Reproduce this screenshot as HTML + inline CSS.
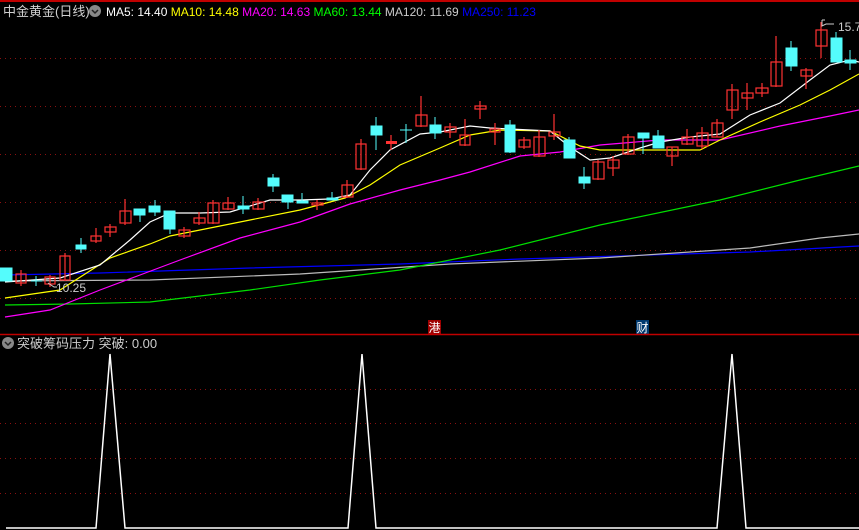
<!DOCTYPE html>
<html><head><meta charset="utf-8"><style>
html,body{margin:0;padding:0;background:#000;width:859px;height:530px;overflow:hidden}
svg{display:block}
text{font-family:"Liberation Sans","Noto Sans CJK SC",sans-serif}
</style></head><body>
<svg width="859" height="530" viewBox="0 0 859 530" xmlns="http://www.w3.org/2000/svg">
<rect width="859" height="530" fill="#000"/>
<line x1="0" y1="1" x2="859" y2="1" stroke="#c00000" stroke-width="2"/>
<g stroke="#8a1010" stroke-width="1" stroke-dasharray="1,4">
<line x1="0" y1="58.5" x2="859" y2="58.5"/><line x1="0" y1="106.5" x2="859" y2="106.5"/>
<line x1="0" y1="154.5" x2="859" y2="154.5"/><line x1="0" y1="202.5" x2="859" y2="202.5"/>
<line x1="0" y1="250.5" x2="859" y2="250.5"/><line x1="0" y1="298.5" x2="859" y2="298.5"/>
<line x1="0" y1="389.5" x2="859" y2="389.5"/><line x1="0" y1="423.5" x2="859" y2="423.5"/>
<line x1="0" y1="458.5" x2="859" y2="458.5"/><line x1="0" y1="493.5" x2="859" y2="493.5"/>
</g>
<text x="3" y="16" font-size="13" fill="#d0d0d0">中金黄金(日线)</text>
<circle cx="95" cy="11" r="6" fill="#888"/><path d="M92 10l3 3 3-3" stroke="#222" stroke-width="1.5" fill="none"/>
<text x="106" y="16" font-size="12"><tspan fill="#fff">MA5: 14.40 </tspan><tspan fill="#ffff00">MA10: 14.48 </tspan><tspan fill="#ff00ff">MA20: 14.63 </tspan><tspan fill="#00ff00">MA60: 13.44 </tspan><tspan fill="#ccc">MA120: 11.69 </tspan><tspan fill="#0000ff">MA250: 11.23</tspan></text>
<g fill="none" stroke-width="1.2">
<polyline stroke="#0000ff" points="5,275 100,273 250,268 400,264 520,259 650,255 750,252 859,246"/>
<polyline stroke="#bbb" points="5,281 150,280 300,274 450,264 600,258 750,248 820,238 859,234"/>
<polyline stroke="#00e000" points="5,305 70,304 150,302 250,290 320,280 400,270 500,250 600,225 720,200 800,180 859,166"/>
<polyline stroke="#ff00ff" points="5,317 50,310 100,290 140,275 180,260 240,238 300,222 350,204 400,190 440,180 470,172 520,156 560,152 600,145 660,140 720,140 780,126 830,116 859,110"/>
<polyline stroke="#ffff00" points="5,298 60,290 110,258 150,244 170,236 200,230 250,220 300,210 345,198 370,185 400,165 440,148 470,135 500,130 550,131 580,146 600,150 630,150 660,150 700,150 720,140 760,122 800,105 830,90 859,74"/>
<polyline stroke="#fff" points="5,282 60,278 100,265 130,240 150,222 170,213 200,213 230,212 270,200 300,200 330,199 350,195 370,170 390,150 420,134 440,132 470,126 490,128 510,129 550,131 570,147 590,160 610,158 640,148 660,142 690,137 720,134 750,115 780,103 810,80 830,65 850,60 859,62"/>
</g>
<g fill="#54fcfc" stroke="#54fcfc">
<rect x="0" y="268" width="12" height="13"/>
<line x1="36" y1="276" x2="36" y2="286"/><line x1="31" y1="281" x2="42" y2="281"/>
<line x1="81" y1="238" x2="81" y2="253"/><rect x="76" y="245" width="10" height="4"/>
<line x1="140" y1="209" x2="140" y2="222"/><rect x="134" y="209" width="11" height="6"/>
<line x1="155" y1="200" x2="155" y2="216"/><rect x="149" y="206" width="11" height="6"/>
<line x1="170" y1="211" x2="170" y2="234"/><rect x="164" y="211" width="11" height="18"/>
<line x1="243" y1="196" x2="243" y2="214"/><rect x="238" y="206" width="11" height="3"/>
<line x1="273" y1="174" x2="273" y2="192"/><rect x="268" y="178" width="11" height="8"/>
<line x1="288" y1="195" x2="288" y2="209"/><rect x="282" y="195" width="11" height="7"/>
<line x1="302" y1="193" x2="302" y2="203"/><rect x="297" y="201" width="11" height="2"/>
<line x1="332" y1="192" x2="332" y2="200"/><rect x="327" y="198" width="11" height="2"/>
<line x1="376" y1="117" x2="376" y2="150"/><rect x="371" y="126" width="11" height="9"/>
<line x1="406" y1="124" x2="406" y2="143"/><line x1="400" y1="130" x2="412" y2="130"/>
<line x1="435" y1="117" x2="435" y2="139"/><rect x="430" y="125" width="11" height="8"/>
<line x1="510" y1="120" x2="510" y2="153"/><rect x="505" y="125" width="10" height="27"/>
<line x1="569" y1="137" x2="569" y2="158"/><rect x="564" y="140" width="11" height="18"/>
<line x1="584" y1="167" x2="584" y2="189"/><rect x="579" y="177" width="11" height="6"/>
<line x1="643" y1="133" x2="643" y2="154"/><rect x="638" y="133" width="11" height="5"/>
<line x1="658" y1="130" x2="658" y2="148"/><rect x="653" y="136" width="11" height="12"/>
<line x1="791" y1="41" x2="791" y2="71"/><rect x="786" y="48" width="11" height="18"/>
<line x1="836" y1="32" x2="836" y2="62"/><rect x="831" y="38" width="11" height="24"/>
<line x1="850" y1="50" x2="850" y2="70"/><rect x="845" y="60" width="11" height="3"/>
</g>
<g fill="none" stroke="#ff3232" stroke-width="1.2">
<path d="M21 270V286M50 275V287M65 253V281M96 228V243M110 224V237M125 199V225M184 227V238M199 212V225M213 200V224M228 197V210M258 198V210M317 200V210M347 180V198M361 139V170M391 135V150M421 96V127M450 123V138M465 119V146M480 101V119M495 123V145M524 137V149M539 130V157M554 114V140M598 160V180M613 156V176M628 134V155M672 147V166M687 129V145M702 127V149M717 119V137M732 84V119M747 83V110M762 83V97M776 36V87M806 68V89M821 22V58"/>
<rect x="16" y="274" width="10" height="9"/>
<rect x="45" y="277" width="10" height="7"/>
<rect x="60" y="256" width="10" height="24"/>
<rect x="91" y="236" width="10" height="5"/>
<rect x="105" y="227" width="11" height="5"/>
<rect x="120" y="211" width="11" height="12"/>
<rect x="179" y="230" width="11" height="6"/>
<rect x="194" y="218" width="11" height="5"/>
<rect x="208" y="203" width="11" height="20"/>
<rect x="223" y="203" width="11" height="6"/>
<rect x="253" y="202" width="11" height="7"/>
<rect x="312" y="203" width="11" height="2"/>
<rect x="342" y="185" width="11" height="12"/>
<rect x="356" y="144" width="10" height="25"/>
<rect x="416" y="115" width="11" height="11"/>
<rect x="445" y="127" width="11" height="5"/>
<rect x="460" y="135" width="10" height="10"/>
<rect x="475" y="106" width="11" height="3"/>
<rect x="490" y="129" width="10" height="3"/>
<rect x="519" y="140" width="11" height="7"/>
<rect x="534" y="137" width="11" height="19"/>
<rect x="549" y="132" width="11" height="4"/>
<rect x="593" y="162" width="11" height="17"/>
<rect x="608" y="160" width="11" height="8"/>
<rect x="623" y="137" width="11" height="17"/>
<rect x="667" y="147" width="11" height="9"/>
<rect x="682" y="137" width="11" height="7"/>
<rect x="697" y="133" width="11" height="13"/>
<rect x="712" y="123" width="11" height="14"/>
<rect x="727" y="90" width="11" height="20"/>
<rect x="742" y="93" width="11" height="5"/>
<rect x="756" y="88" width="12" height="5"/>
<rect x="771" y="62" width="11" height="24"/>
<rect x="801" y="70" width="11" height="6"/>
<rect x="816" y="30" width="11" height="16"/>
</g>
<rect x="386" y="141" width="11" height="3" fill="#ff3232"/>
<text x="56" y="292" font-size="12" fill="#ccc">10.25</text>
<path d="M48 283l6 4h3" stroke="#ccc" fill="none"/>
<text x="838" y="31" font-size="12" fill="#ccc">15.7</text>
<path d="M822 20h3M822 20v6l4-2h8" stroke="#ccc" fill="none"/>
<rect x="428" y="320" width="13" height="14" fill="#a00000"/>
<text x="428.5" y="332" font-size="12" fill="#fff">港</text>
<rect x="636" y="320" width="13" height="14" fill="#003a70"/>
<text x="636.5" y="332" font-size="12" fill="#fff">财</text>
<line x1="0" y1="334.5" x2="859" y2="334.5" stroke="#c00000" stroke-width="1.5"/>
<circle cx="8" cy="343" r="6" fill="#888"/><path d="M5 342l3 3 3-3" stroke="#222" stroke-width="1.5" fill="none"/>
<text x="17" y="348" font-size="13" fill="#ccc">突破筹码压力 突破: 0.00</text>
<polyline fill="none" stroke="#fff" stroke-width="1.5" points="6,528 96,528 110,354 125,528 348,528 362,354 376,528 717,528 732,354 746,528 859,528"/>
</svg>
</body></html>
